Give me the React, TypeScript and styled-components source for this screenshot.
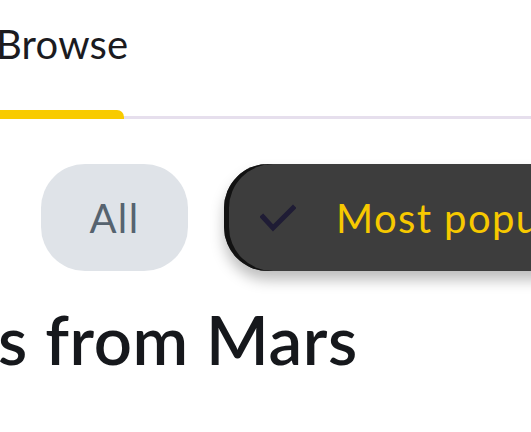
import React from "react";
import styled, { createGlobalStyle } from "styled-components";

const Global = createGlobalStyle`
  html, body { margin: 0; padding: 0; background: #ffffff; }
  body { width: 531px; height: 432px; overflow: hidden; font-family: "Lato", "Open Sans", sans-serif; }
`;

const Page = styled.div`
  width: 531px;
  height: 432px;
  overflow: hidden;
  display: flex;
  flex-direction: column;
`;

const TabBar = styled.div`
  display: flex;
  align-items: flex-end;
  height: 119px;
  box-sizing: border-box;
`;

const Tab = styled.div`
  width: 124px;
  height: 100%;
  display: flex;
  flex-direction: column;
  justify-content: space-between;
`;

const TabLabel = styled.span`
  margin-top: 20px;
  margin-left: -4px;
  font-size: 40px;
  line-height: 48px;
  font-weight: 400;
  color: #1b1b1f;
  white-space: nowrap;
  letter-spacing: 0.2px;
`;

const Indicator = styled.div`
  height: 9px;
  background: #f8cb00;
  border-top-right-radius: 7px;
`;

const Rule = styled.div`
  flex: 1;
  height: 3px;
  background: #e6dfed;
`;

const ChipRow = styled.div`
  display: flex;
  gap: 36px;
  margin-top: 45px;
  padding-left: 41px;
`;

const Chip = styled.div<{ $selected?: boolean }>`
  flex: none;
  height: 107px;
  box-sizing: border-box;
  display: flex;
  align-items: center;
  gap: 40px;
  border-radius: 44px;
  font-size: 40px;
  letter-spacing: 1.4px;
  white-space: nowrap;
  padding: ${(p) => (p.$selected ? "0 40px 0 36px" : "0")};
  background: ${(p) => (p.$selected ? "#3d3d3d" : "#dfe3e8")};
  color: ${(p) => (p.$selected ? "#f7c900" : "#56636f")};
  box-shadow: ${(p) =>
    p.$selected
      ? "inset 5px 0 0 #121212, 0 9px 14px rgba(0,0,0,0.26)"
      : "none"};
  width: ${(p) => (p.$selected ? "auto" : "147px")};
  justify-content: ${(p) => (p.$selected ? "flex-start" : "center")};
`;

const Heading = styled.h1`
  margin: 32px 0 0 -2px;
  font-size: 67px;
  line-height: 72px;
  font-weight: 600;
  letter-spacing: 0.6px;
  color: #16181c;
  white-space: nowrap;
`;

const Check = () => (
  <svg width="36" height="28" viewBox="0 0 36 28" fill="none">
    <path d="M3 13 L13 24 L33 4" stroke="#1f1c35" strokeWidth="5" strokeLinecap="square" />
  </svg>
);

export default function App() {
  return (
    <Page>
      <Global />
      <TabBar>
        <Tab>
          <TabLabel>Browse</TabLabel>
          <Indicator />
        </Tab>
        <Rule />
      </TabBar>
      <ChipRow>
        <Chip>All</Chip>
        <Chip $selected>
          <Check />
          Most popular
        </Chip>
      </ChipRow>
      <Heading>s from Mars</Heading>
    </Page>
  );
}
